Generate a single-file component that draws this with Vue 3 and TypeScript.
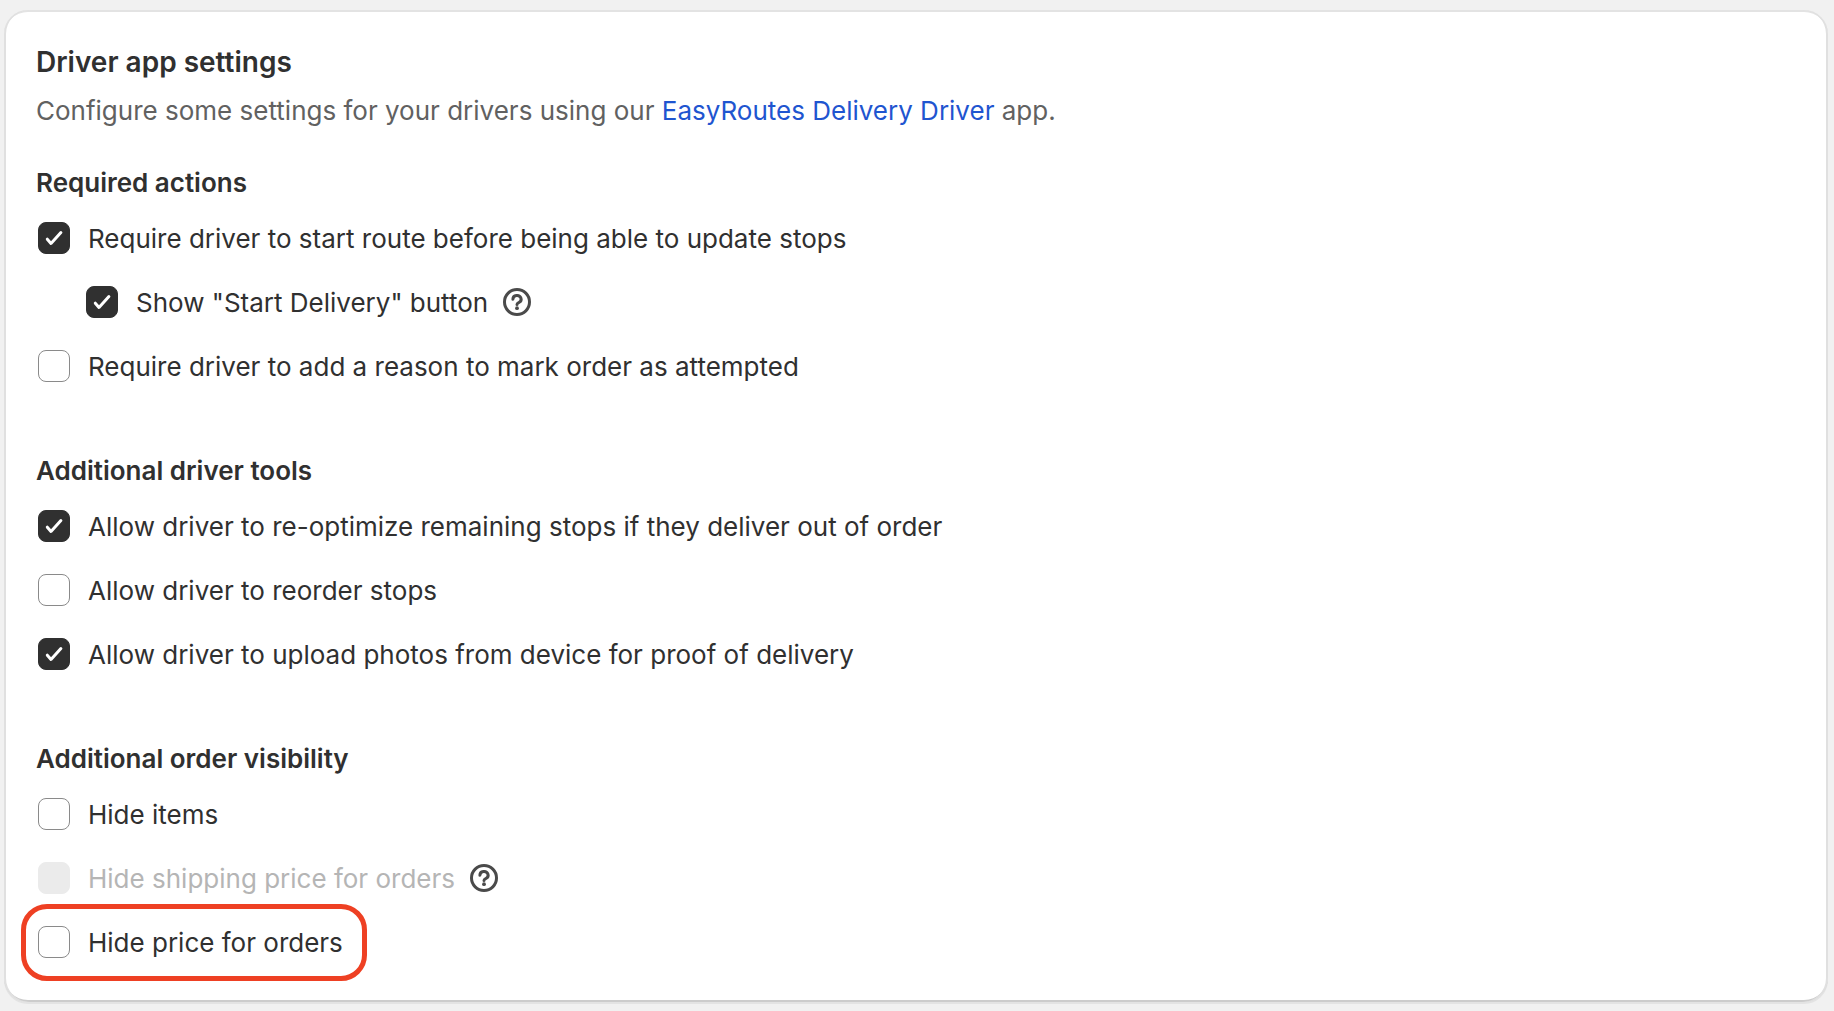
<script setup lang="ts">
import { reactive } from 'vue'

interface Setting {
  id: string
  label: string
  checked: boolean
  nested?: boolean
  disabled?: boolean
  help?: boolean
  highlighted?: boolean
}

interface SettingGroup {
  title: string
  settings: Setting[]
}

const groups = reactive<SettingGroup[]>([
  {
    title: 'Required actions',
    settings: [
      { id: 'require-start', label: 'Require driver to start route before being able to update stops', checked: true },
      { id: 'show-start', label: 'Show "Start Delivery" button', checked: true, nested: true, help: true },
      { id: 'require-reason', label: 'Require driver to add a reason to mark order as attempted', checked: false },
    ],
  },
  {
    title: 'Additional driver tools',
    settings: [
      { id: 'reoptimize', label: 'Allow driver to re-optimize remaining stops if they deliver out of order', checked: true },
      { id: 'reorder', label: 'Allow driver to reorder stops', checked: false },
      { id: 'upload-photos', label: 'Allow driver to upload photos from device for proof of delivery', checked: true },
    ],
  },
  {
    title: 'Additional order visibility',
    settings: [
      { id: 'hide-items', label: 'Hide items', checked: false },
      { id: 'hide-shipping', label: 'Hide shipping price for orders', checked: false, disabled: true, help: true },
      { id: 'hide-price', label: 'Hide price for orders', checked: false, highlighted: true },
    ],
  },
])
</script>

<template>
  <main class="page">
    <section class="card">
      <header class="intro">
        <h2 class="title">Driver app settings</h2>
        <p class="subtitle">
          Configure some settings for your drivers using our
          <a class="link" href="#">EasyRoutes Delivery Driver</a> app.
        </p>
      </header>

      <div class="groups">
        <section v-for="group in groups" :key="group.title" class="group">
          <h3 class="group-title">{{ group.title }}</h3>
          <div class="settings">
            <div
              v-for="s in group.settings"
              :key="s.id"
              class="row"
              :class="{ nested: s.nested, highlighted: s.highlighted }"
            >
              <label class="choice" :class="{ disabled: s.disabled }" :for="s.id">
                <span class="control">
                  <input :id="s.id" v-model="s.checked" class="box" type="checkbox" :disabled="s.disabled" />
                  <svg v-if="s.checked" class="tick" viewBox="0 0 32 32" aria-hidden="true">
                    <path d="M9.3 17.2 13 21.4 22.9 10.6" />
                  </svg>
                </span>
                <span class="choice-text">{{ s.label }}</span>
              </label>
              <button v-if="s.help" class="help" type="button" aria-label="Help">
                <svg viewBox="0 0 20 20" aria-hidden="true">
                  <circle cx="10" cy="10" r="6.25" />
                  <path d="M7.95 8.6a2.05 1.85 0 1 1 3 1.65c-.6.3-.95.45-.95.95" />
                  <circle class="dot" cx="10" cy="13.1" r="0.95" />
                </svg>
              </button>
            </div>
          </div>
        </section>
      </div>
    </section>
  </main>
</template>

<style>
body {
  margin: 0;
  background: #f1f1f1;
}
</style>

<style scoped>
.page {
  padding: 10px 6px 9px 4px;
  font-family: Inter, 'Liberation Sans', sans-serif;
  font-size: 26px;
  font-weight: 400;
  line-height: 40px;
  color: #303030;
}
.card {
  padding: 32px;
  background: #fff;
  border-radius: 24px;
  box-shadow:
    inset 2px 0 0 #e0e0e0,
    inset -2px 0 0 #e0e0e0,
    inset 0 2px 0 #e3e3e3,
    inset 0 -2px 0 #cccccc,
    0 2px 0 #e3e3e3;
}
.intro {
  display: flex;
  flex-direction: column;
  gap: 9px;
  margin-bottom: 32px;
}
h2,
h3,
p {
  margin: 0;
}
.title {
  font-size: 28px;
  font-weight: 600;
}
.subtitle {
  color: #616161;
}
.link {
  color: #1f55d0;
  text-decoration: none;
}
.groups {
  display: flex;
  flex-direction: column;
  gap: 57px;
}
.group {
  display: flex;
  flex-direction: column;
  gap: 7px;
}
.group-title {
  font-size: 26px;
  font-weight: 600;
}
.settings {
  display: flex;
  flex-direction: column;
  align-items: flex-start;
  gap: 8px;
}
.row {
  position: relative;
  display: flex;
  align-items: center;
  gap: 9px;
}
.row.nested {
  margin-left: 48px;
}
.row.highlighted::after {
  content: '';
  position: absolute;
  inset: -10px -24px -11px -15px;
  border: 5px solid #ee4023;
  border-radius: 26px;
  pointer-events: none;
}
.choice {
  display: flex;
  align-items: center;
  gap: 16px;
  padding: 7px 0;
}
.choice.disabled {
  color: #b5b5b5;
}
.choice-text {
  padding-top: 2px;
}
.control {
  display: grid;
  flex: none;
  padding: 2px;
}
.box,
.tick {
  grid-area: 1 / 1;
  width: 32px;
  height: 32px;
}
.box {
  appearance: none;
  box-sizing: border-box;
  margin: 0;
  border: 1px solid #8a8a8a;
  border-radius: 8px;
  background: #fff;
}
.box:checked {
  border-color: #303030;
  background: #303030;
}
.box:disabled {
  border-color: #ebebeb;
  background: #ebebeb;
}
.tick {
  pointer-events: none;
  fill: none;
  stroke: #fff;
  stroke-width: 3;
  stroke-linecap: round;
  stroke-linejoin: round;
}
.help {
  width: 40px;
  height: 40px;
  padding: 0;
  border: 0;
  background: none;
}
.help svg {
  display: block;
  fill: none;
  stroke: #4a4a4a;
  stroke-width: 1.5;
  stroke-linecap: round;
}
.help .dot {
  fill: #4a4a4a;
  stroke: none;
}
</style>
